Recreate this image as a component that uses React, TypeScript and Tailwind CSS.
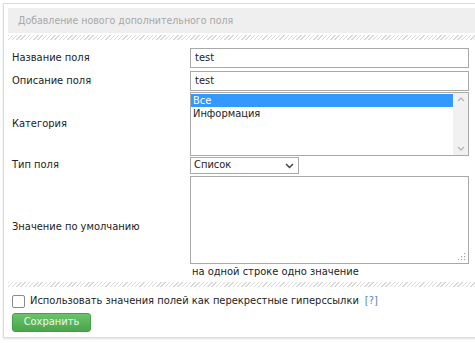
import React from "react";

const font = { fontFamily: '"DejaVu Sans Condensed", "DejaVu Sans", Verdana, sans-serif' };

export default function App() {
  return (
    <div className="w-[475px] h-[343px] bg-white overflow-hidden relative" style={font}>
      <div className="absolute left-[3px] top-[3px] w-[500px] h-[335px] border border-[#dcdcdc] shadow-[0_1px_2px_rgba(0,0,0,0.12)] bg-white pt-[4px] pl-[4px]">
        <div className="h-[25px] bg-[#efefef] flex items-center pl-[10px] text-[10.5px] text-[#a8a8a8]">
          Добавление нового дополнительного поля
        </div>
        <div className="h-[5px] mt-[2px] bg-[repeating-linear-gradient(135deg,#d8d8d8_0px,#d8d8d8_1px,transparent_1px,transparent_3px)] w-[467px]" />
        <div className="w-[467px] text-[11px] text-[#222]">
          <div className="flex items-center mt-[8px] h-[20px]">
            <div className="w-[182px] pl-[4px]">Название поля</div>
            <div className="w-[279px] h-[20px] border border-[#a9a9a9] flex items-center pl-[4px]">test</div>
          </div>
          <div className="flex items-center mt-[3px] h-[20px]">
            <div className="w-[182px] pl-[4px]">Описание поля</div>
            <div className="w-[279px] h-[20px] border border-[#a9a9a9] flex items-center pl-[4px]">test</div>
          </div>
          <div className="flex items-center mt-[1px] h-[64px]">
            <div className="w-[182px] pl-[4px]">Категория</div>
            <div className="w-[279px] h-[64px] border border-[#a9a9a9] flex">
              <div className="flex-1 pt-[1px]">
                <div className="bg-[#3399ff] text-white h-[13px] leading-[13px] pl-[2px]">Все</div>
                <div className="h-[14px] leading-[14px] pl-[2px]">Информация</div>
              </div>
              <div className="w-[15px] bg-[#f1f1f1] flex flex-col justify-between items-center py-[3px]">
                <svg width="8" height="6" viewBox="0 0 8 6"><path d="M1 5 L4 2 L7 5" stroke="#b5b5b5" strokeWidth="1.3" fill="none" /></svg>
                <svg width="8" height="6" viewBox="0 0 8 6"><path d="M1 1 L4 4 L7 1" stroke="#b5b5b5" strokeWidth="1.3" fill="none" /></svg>
              </div>
            </div>
          </div>
          <div className="flex items-center mt-[1px] h-[17px]">
            <div className="w-[182px] pl-[4px]">Тип поля</div>
            <div className="w-[109px] h-[17px] border border-[#a9a9a9] flex items-center pl-[3px] pr-[4px] justify-between">
              <span>Список</span>
              <svg width="9" height="6" viewBox="0 0 9 6"><path d="M1 1 L4.5 4.5 L8 1" stroke="#444" strokeWidth="1.5" fill="none" /></svg>
            </div>
          </div>
          <div className="flex items-center mt-[2px]">
            <div className="w-[182px] pl-[4px]">Значение по умолчанию</div>
            <div className="flex flex-col">
              <div className="w-[279px] h-[88px] border border-[#a9a9a9] relative">
                <svg className="absolute right-[2px] bottom-[2px]" width="8" height="8" viewBox="0 0 8 8">
                  <rect x="6" y="0" width="1.2" height="1.2" fill="#aaa" />
                  <rect x="3" y="3" width="1.2" height="1.2" fill="#aaa" />
                  <rect x="6" y="3" width="1.2" height="1.2" fill="#aaa" />
                  <rect x="0" y="6" width="1.2" height="1.2" fill="#aaa" />
                  <rect x="3" y="6" width="1.2" height="1.2" fill="#aaa" />
                  <rect x="6" y="6" width="1.2" height="1.2" fill="#aaa" />
                </svg>
              </div>
              <div className="pl-[2px] mt-[1px] h-[14px] leading-[14px]">на одной строке одно значение</div>
            </div>
          </div>
          <div className="h-[5px] mt-[3px] bg-[repeating-linear-gradient(135deg,#d8d8d8_0px,#d8d8d8_1px,transparent_1px,transparent_3px)]" />
          <div className="flex items-center mt-[7px] h-[14px] pl-[4px]">
            <div className="w-[13px] h-[13px] border border-[#8a8a8a] rounded-[2px] bg-white" />
            <span className="ml-[5px]">Использовать значения полей как перекрестные гиперссылки</span>
            <span className="ml-[6px] text-[#5b86b8]">[?]</span>
          </div>
          <div className="pl-[4px] mt-[5px]">
            <div className="w-[79px] h-[19px] rounded-[3px] border border-[#46a046] bg-[linear-gradient(#6ac46a,#4aa64a)] text-[#eef8ee] text-[11px] flex items-center justify-center">
              Сохранить
            </div>
          </div>
        </div>
      </div>
    </div>
  );
}
